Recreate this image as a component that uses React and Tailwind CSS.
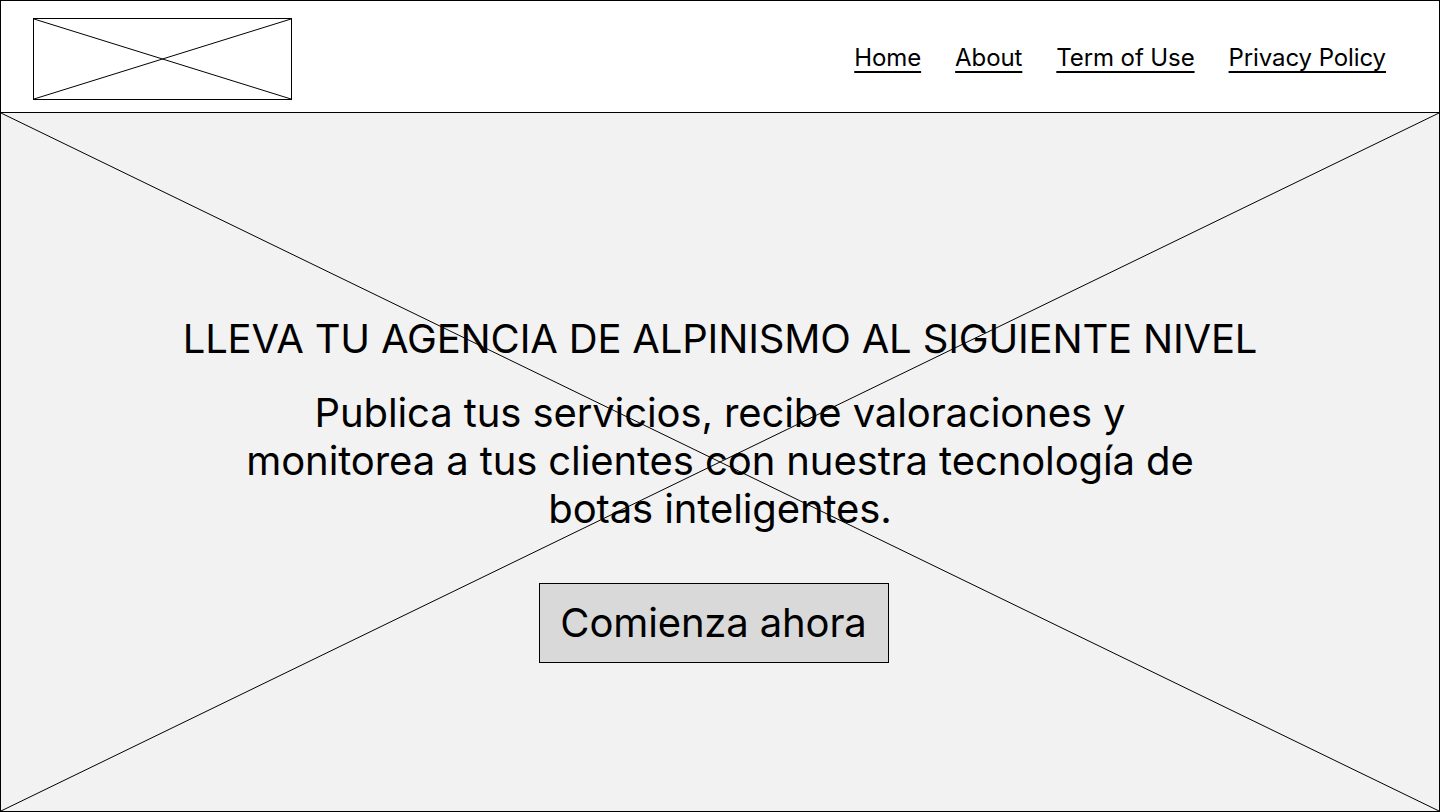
import React from "react";

function Cross({ className = "" }) {
  return (
    <svg
      className={className}
      viewBox="0 0 100 100"
      preserveAspectRatio="none"
      aria-hidden="true"
    >
      <line x1="0" y1="0" x2="100" y2="100" stroke="#000" strokeWidth="1" vectorEffect="non-scaling-stroke" />
      <line x1="100" y1="0" x2="0" y2="100" stroke="#000" strokeWidth="1" vectorEffect="non-scaling-stroke" />
    </svg>
  );
}

export default function App() {
  const links = ["Home", "About", "Term of Use", "Privacy Policy"];
  return (
    <div
      className="w-[1440px] h-[812px] border border-black flex flex-col bg-white text-black overflow-hidden"
      style={{ fontFamily: "Inter, 'Noto Sans', sans-serif" }}
    >
      <header className="h-[112px] shrink-0 flex items-start justify-between pl-[32px] pr-[53px] border-b border-black bg-white">
        <div className="relative mt-[17px] w-[259px] h-[82px] border border-black">
          <Cross className="absolute inset-0 w-full h-full" />
        </div>
        <nav className="flex gap-[34px] mt-[41px]">
          {links.map((l) => (
            <a key={l} href="#" className="text-[24px] leading-[32px] tracking-[-0.1px] underline underline-offset-[5px] decoration-[1.5px]">
              {l}
            </a>
          ))}
        </nav>
      </header>
      <main className="relative flex-1 bg-[#f2f2f2] flex flex-col items-center pt-[202px]">
        <Cross className="absolute inset-0 w-full h-full" />
        <h1 className="relative text-[40px] leading-[48px] tracking-[-0.17px] font-normal text-center whitespace-nowrap">
          LLEVA TU AGENCIA DE ALPINISMO AL SIGUIENTE NIVEL
        </h1>
        <p className="relative mt-[26px] w-[970px] text-[40px] leading-[48px] tracking-[-0.1px] text-center">
          Publica tus servicios, recibe valoraciones y monitorea a tus clientes con nuestra tecnología de botas inteligentes.
        </p>
        <button className="relative mt-[50px] mr-[13px] w-[350px] h-[80px] bg-[#d9d9d9] border border-black text-[40px] leading-[48px] tracking-[-0.14px]">
          Comienza ahora
        </button>
      </main>
    </div>
  );
}
